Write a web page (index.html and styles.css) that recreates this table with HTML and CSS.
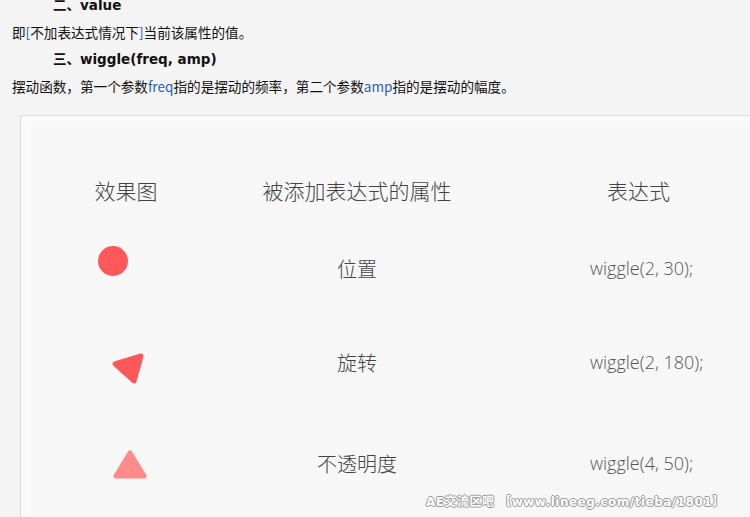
FILE: index.html
```html
<!DOCTYPE html>
<html lang="zh-CN">
<head>
  <meta charset="UTF-8" />
  <title>wiggle(freq, amp)</title>
  <link rel="stylesheet" href="styles.css">
</head>
<body>
  <div class="article">
    <p class="heading">二、value</p>
    <p>即<span class="blue">[</span>不加表达式情况下<span class="blue">]</span>当前该属性的值。</p>
    <p class="heading">三、wiggle(freq, amp)</p>
    <p>摆动函数，第一个参数<span class="blue">freq</span>指的是摆动的频率，第二个参数<span class="blue">amp</span>指的是摆动的幅度。</p>

    <div class="figure">
      <div class="table">
        <div class="th">效果图</div>
        <div class="th">被添加表达式的属性</div>
        <div class="th expr-head">表达式</div>

        <div class="shape">
          <svg width="190" height="50" viewBox="0 0 190 50">
            <circle cx="82" cy="18" r="15" fill="#ff585b" />
          </svg>
        </div>
        <div class="prop">位置</div>
        <div class="expr">wiggle(2, 30);</div>

        <div class="shape">
          <svg width="190" height="50" viewBox="0 0 190 50">
            <polygon points="84,27 110,19 103,44" fill="#ff585b" stroke="#ff585b" stroke-width="5" stroke-linejoin="round" />
          </svg>
        </div>
        <div class="prop">旋转</div>
        <div class="expr">wiggle(2, 180);</div>

        <div class="shape">
          <svg width="190" height="50" viewBox="0 0 190 50">
            <polygon points="99,15 85,38 113,38" fill="#ff8b8b" stroke="#ff8b8b" stroke-width="5" stroke-linejoin="round" />
          </svg>
        </div>
        <div class="prop">不透明度</div>
        <div class="expr">wiggle(4, 50);</div>
      </div>
      <div class="watermark">AE交流区吧 【www.lineeg.com/tieba/1801】</div>
    </div>
  </div>
</body>
</html>
```

FILE: styles.css
```css
html, body {
  margin: 0;
  padding: 0;
  background: #f4f4f4;
  overflow: hidden;
}
.article {
  margin-top: -8px;
  padding-left: 12px;
  font-family: "Noto Sans CJK SC", "Noto Sans", sans-serif;
  font-size: 13.6px;
  color: #111;
}
.article p {
  margin: 0;
  height: 27px;
  line-height: 27px;
}
.heading {
  padding-left: 41px;
  font-family: "DejaVu Sans", "Noto Sans CJK SC", sans-serif;
  font-weight: bold;
  font-size: 13.5px;
}
.blue {
  color: #2462b0;
}
.figure {
  position: relative;
  margin: 15px 0 0 8px;
  width: 760px;
  height: 420px;
  border: 1px solid #dcdcdc;
  background: #fafafa;
  padding: 10px 0 0 10px;
}
.table {
  display: grid;
  grid-template-columns: 190px 272px 300px;
  grid-template-rows: 30px 126px 62px 140px;
  align-items: center;
  padding-top: 49px;
  height: 100%;
  background: #f7f7f7;
  font-family: "Noto Sans CJK SC", sans-serif;
  font-weight: 300;
  color: #444;
}
.th {
  font-size: 21px;
  text-align: center;
}
.expr-head {
  text-align: left;
  padding-left: 114px;
}
.shape {
  height: 50px;
}
.shape svg {
  display: block;
}
.prop {
  font-size: 20px;
  text-align: center;
}
.expr {
  padding-left: 97px;
  font-family: "Open Sans", "Noto Sans", sans-serif;
  font-size: 18px;
  color: #555;
}
.watermark {
  position: absolute;
  left: 405px;
  top: 376px;
  font-family: "DejaVu Sans", "Noto Sans CJK SC", sans-serif;
  font-weight: bold;
  font-size: 12px;
  letter-spacing: 0.5px;
  color: #fff;
  text-shadow: -1px 0 #999, 1px 0 #999, 0 -1px #999, 0 1px #999;
}
```
